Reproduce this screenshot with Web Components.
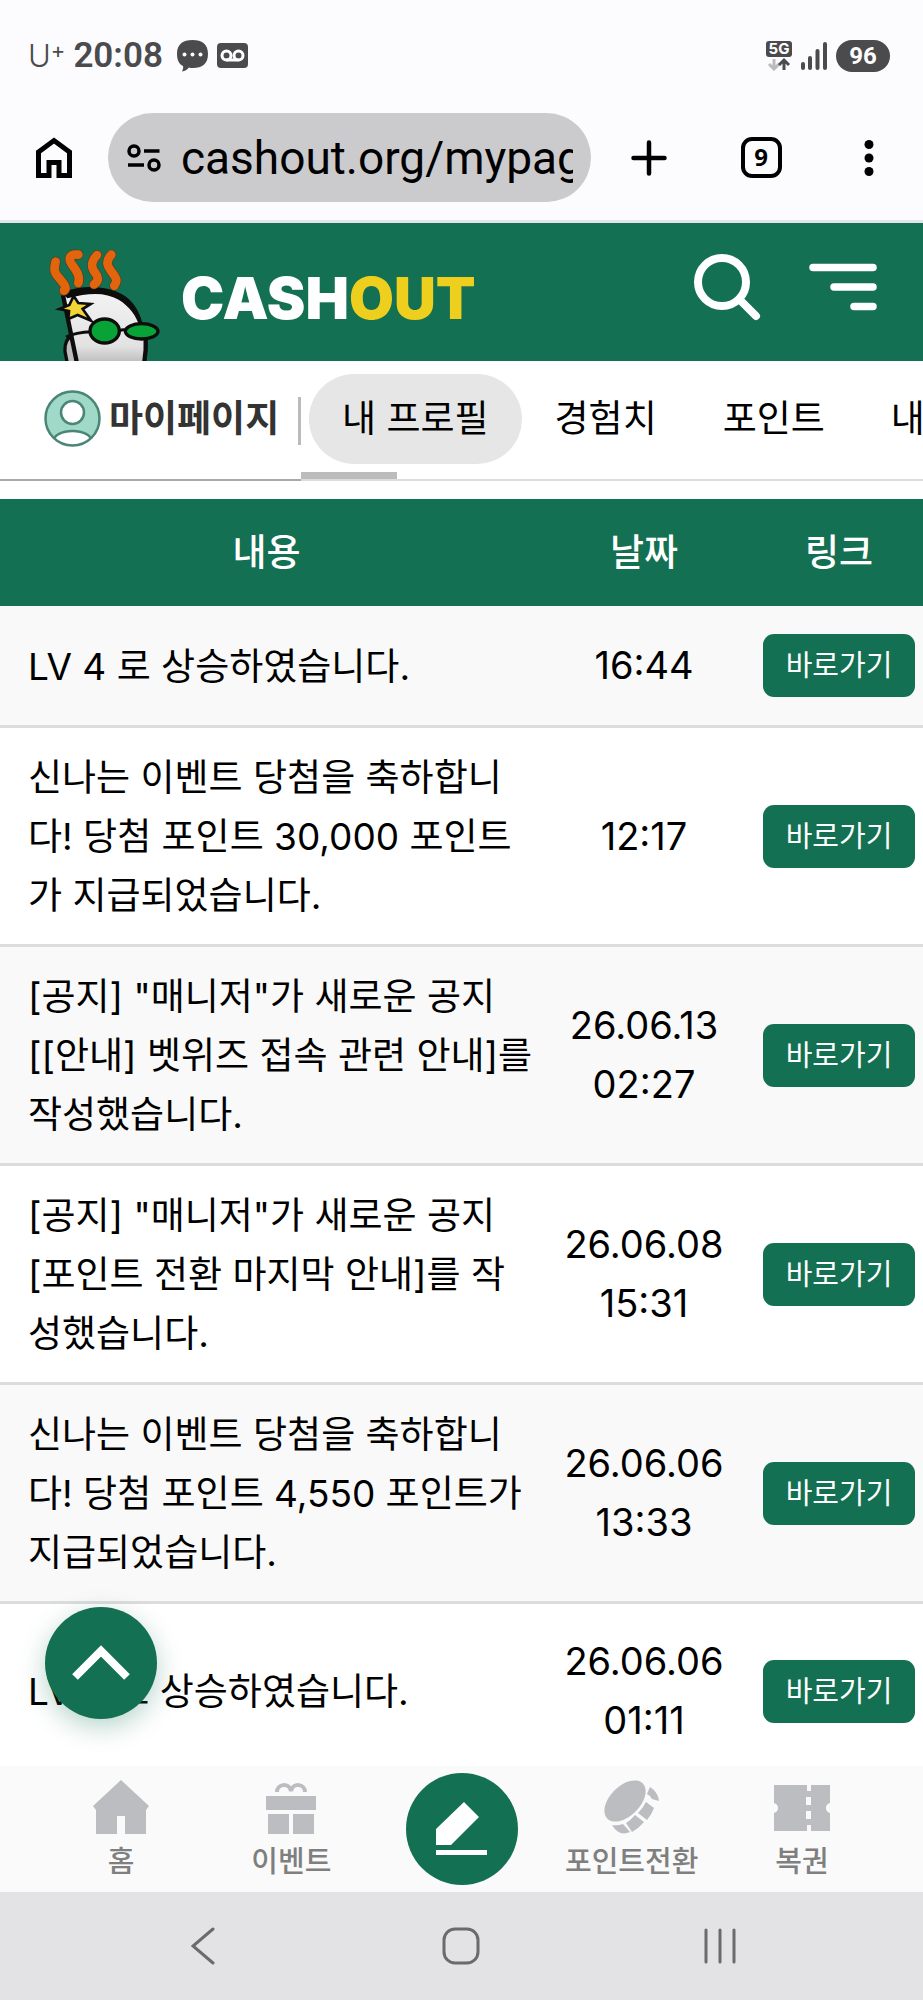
<!DOCTYPE html>
<html lang="ko">
<head>
<meta charset="utf-8">
<meta name="viewport" content="width=device-width, initial-scale=1">
<title>CASHOUT</title>
<style>
  :root {
    --green: #137052;
    --sans: Inter, "Noto Sans CJK KR", sans-serif;
  }

  body {
    margin: 0;
    height: 100vh;
    display: flex;
    flex-direction: column;
    background: #fff;
    color: #000;
    font-family: var(--sans);
  }

  main {
    flex: 1;
    min-height: 0;
    overflow: hidden;
  }
</style>
</head>
<body>
  <status-bar time="20:08" battery="96"></status-bar>
  <browser-bar url="cashout.org/mypage" tabs="9"></browser-bar>
  <site-header></site-header>
  <page-tabs>
    <span slot="title">마이페이지</span>
    <page-tab active>내 프로필</page-tab>
    <page-tab>경험치</page-tab>
    <page-tab>포인트</page-tab>
    <page-tab>내</page-tab>
  </page-tabs>
  <main>
    <notice-table></notice-table>
  </main>
  <bottom-menu></bottom-menu>
  <system-nav></system-nav>

<script>
class StatusBar extends HTMLElement {
  constructor() {
    super();
    this._shadowRoot = this.attachShadow({ mode: 'open' });
  }

  connectedCallback() {
    this._shadowRoot.innerHTML = `
    <style>
      :host {
        display: flex;
        align-items: center;
        box-sizing: border-box;
        height: 113px;
        padding: 0 33px 2px 28px;
        background: #fcfcff;
        color: #4b4b4d;
        font-family: Roboto, sans-serif;
      }
      .carrier { font: 300 31px/40px Inter, sans-serif; }
      .carrier sup { font-size: 22px; font-weight: 400; line-height: 0; vertical-align: 9px; }
      .time { margin: 0 14px 0 8px; font-size: 35px; font-weight: 600; }
      .right { margin-left: auto; }
      .left, .right { display: flex; align-items: center; gap: 9px; }
      .battery {
        width: 54px;
        height: 32px;
        border-radius: 16px;
        background: #4b4b4d;
        color: #fff;
        font: 700 24px/32px Roboto, sans-serif;
        text-align: center;
      }
      .net { display: flex; flex-direction: column; align-items: center; }
      .net span {
        width: 26px;
        height: 16px;
        border-radius: 3px;
        background: #4b4b4d;
        color: #fff;
        font: 700 15px/16px Inter, sans-serif;
        text-align: center;
      }
      svg { display: block; }
    </style>
    <span class="carrier">U<sup>+</sup></span>
    <span class="time">${this.getAttribute('time')}</span>
    <div class="left">
      <svg width="31" height="32" viewBox="0 0 31 32">
        <path fill="#4b4b4d" d="M15.500 0C25 0 31 4 31 14s-6 14-15 14c-2 0-3 0-4-.5C10 30 8 31 5 31.500c1-2 1.500-4 1-5.500C2 24 0 20 0 14 0 4 6 0 15.500 0z"/>
        <g fill="#fff"><circle cx="7.500" cy="14.500" r="2"/><circle cx="15.500" cy="14.500" r="2"/><circle cx="23.500" cy="14.500" r="2"/></g>
      </svg>
      <svg width="31" height="25" viewBox="0 0 31 25">
        <rect width="31" height="25" rx="4" fill="#4b4b4d"/>
        <g fill="none" stroke="#fff" stroke-width="3"><circle cx="9.500" cy="12.500" r="4.500"/><circle cx="21.500" cy="12.500" r="4.500"/><path d="M9.500 17h12"/></g>
      </svg>
    </div>
    <div class="right">
      <div class="net">
        <span>5G</span>
        <svg width="24" height="14" viewBox="0 0 24 14" fill="none" stroke-width="3">
          <path stroke="#bbb" d="M7 2v10M2 7l5 5 5-5"/>
          <path stroke="#4b4b4d" d="M17 13V3M12 8l5-5 5 5"/>
        </svg>
      </div>
      <svg width="26" height="28" viewBox="0 0 26 28" stroke="#4b4b4d" stroke-width="4" stroke-linecap="round">
        <path d="M2 22v4M9 16v10M16.500 9v17M24 2v24"/>
      </svg>
      <span class="battery">${this.getAttribute('battery')}</span>
    </div>
    `;
  }
}

class BrowserBar extends HTMLElement {
  constructor() {
    super();
    this._shadowRoot = this.attachShadow({ mode: 'open' });
  }

  connectedCallback() {
    this._shadowRoot.innerHTML = `
    <style>
      :host {
        display: flex;
        align-items: center;
        box-sizing: border-box;
        height: 110px;
        padding: 0 0 18px;
        border-bottom: 3px solid #e1e7e8;
        background: #fcfcff;
      }
      button {
        display: flex;
        align-items: center;
        justify-content: center;
        width: 108px;
        height: 89px;
        padding: 0;
        border: none;
        background: none;
        color: #000;
      }
      .new-tab { width: 116px; }
      .omnibox {
        flex: 1;
        min-width: 0;
        display: flex;
        align-items: center;
        gap: 20px;
        height: 89px;
        padding: 0 18px 0 19px;
        box-sizing: border-box;
        border-radius: 45px;
        background: #cbcbcd;
      }
      .omnibox svg { flex: none; }
      input {
        flex: 1;
        min-width: 0;
        height: 70px;
        padding: 0;
        border: none;
        outline: none;
        background: none;
        color: #000;
        font: 400 46px/70px Roboto, sans-serif;
      }
      .count {
        width: 33px;
        height: 33px;
        border: 4px solid #000;
        border-radius: 11px;
        font: 700 24px/32px "Open Sans", sans-serif;
      }
    </style>
    <button aria-label="홈">
      <svg width="38" height="42" viewBox="0 0 38 42" fill="none" stroke="#000" stroke-width="5">
        <path d="M3.500 38.500V15L19 3.500 34.500 15v23.500H24V25.500H14v13z"/>
      </svg>
    </button>
    <div class="omnibox">
      <svg width="34" height="28" viewBox="0 0 34 28" fill="none" stroke="#000" stroke-width="3.500">
        <circle cx="7" cy="7" r="5"/><circle cx="27" cy="21" r="5"/><path d="M17 7h15.500M1 21h16"/>
      </svg>
      <input type="text" aria-label="주소" value="${this.getAttribute('url')}">
    </div>
    <button class="new-tab" aria-label="새 탭">
      <svg width="36" height="36" viewBox="0 0 36 36" stroke="#000" stroke-width="4.500" stroke-linecap="round"><path d="M18 2.500v31M2.500 18h31"/></svg>
    </button>
    <button aria-label="탭"><span class="count">${this.getAttribute('tabs')}</span></button>
    <button aria-label="메뉴">
      <svg width="10" height="36" viewBox="0 0 10 36"><circle cx="5" cy="4.500" r="4.500"/><circle cx="5" cy="18" r="4.500"/><circle cx="5" cy="31.500" r="4.500"/></svg>
    </button>
    `;
  }
}

class SiteHeader extends HTMLElement {
  constructor() {
    super();
    this._shadowRoot = this.attachShadow({ mode: 'open' });
  }

  connectedCallback() {
    this._shadowRoot.innerHTML = `
    <style>
      :host {
        display: flex;
        align-items: center;
        height: 138px;
        padding: 0 46px 0 30px;
        background: var(--green);
      }
      a {
        display: flex;
        align-items: center;
        align-self: stretch;
        gap: 1px;
        color: #fff;
        font: 900 58px/70px Inter, sans-serif;
        text-decoration: none;
      }
      .mascot { align-self: flex-end; }
      .word { margin-top: 11px; }
      .word b { color: #eecf1d; font-weight: inherit; }
      nav { display: flex; align-items: center; gap: 48px; margin: 0 0 10px auto; }
      button { display: block; padding: 0; border: none; background: none; }
      svg { display: block; }
    </style>
    <a href="#">
      <svg class="mascot" width="150" height="126" viewBox="0 0 450 378">
        <defs>
          <linearGradient id="skin" x1="0" y1="0" x2="0" y2="1">
            <stop offset="0" stop-color="#f4f4f4"/><stop offset=".75" stop-color="#e2e2e2"/><stop offset="1" stop-color="#b8b8b8"/>
          </linearGradient>
        </defs>
        <path d="M124 305c-16 6-20 22-19 45l8 40h30" fill="#bdbdbd" stroke="#0d0d0d" stroke-width="10"/>
        <path d="M143 390L102 182C170 150 240 160 280 190 312 214 328 240 336 280L345 330V390z" fill="url(#skin)"/>
        <path d="M94 172C170 145 245 155 286 184 318 208 332 240 340 275L330 278C318 240 298 214 266 194 226 172 180 172 112 190z" fill="#0d0d0d"/>
        <path d="M99 180L142 390" stroke="#0d0d0d" stroke-width="13"/>
        <path d="M347 308V345L342 390" fill="none" stroke="#0d0d0d" stroke-width="13"/>
        <path d="M108 306C130 295 155 291 185 290M266 288C280 282 285 284 295 288" fill="none" stroke="#0d0d0d" stroke-width="9"/>
        <ellipse cx="224" cy="288" rx="44" ry="36" fill="#08a336" stroke="#0d0d0d" stroke-width="10"/>
        <ellipse cx="335" cy="289" rx="49" ry="23" fill="#08a336" stroke="#0d0d0d" stroke-width="10"/>
        <path d="M131 183L145 204 182 207 158 222 183 257 143 240 115 252 117 228 88 222 118 210z" fill="#f2d437" stroke="#0d0d0d" stroke-width="8"/>
        <g fill="none" stroke-linecap="round" stroke-linejoin="round">
          <g stroke="#54401f" stroke-width="30">
            <path d="M77 80C68 112 78 118 94 137S108 162 102 167"/>
            <path d="M145 59C117 56 113 72 128 92S150 125 145 144"/>
            <path d="M201 60C181 83 183 98 196 114S203 141 192 148"/>
            <path d="M244 59C224 80 233 94 246 112S264 137 253 152"/>
          </g>
          <g stroke="#e2650e" stroke-width="26">
            <path d="M77 80C68 112 78 118 94 137S108 162 102 167"/>
            <path d="M145 59C117 56 113 72 128 92S150 125 145 144"/>
            <path d="M201 60C181 83 183 98 196 114S203 141 192 148"/>
            <path d="M244 59C224 80 233 94 246 112S264 137 253 152"/>
          </g>
        </g>
      </svg>
      <span class="word">CASH<b>OUT</b></span>
    </a>
    <nav>
      <button aria-label="검색">
        <svg width="68" height="68" viewBox="0 0 68 68" fill="none" stroke="#fff" stroke-width="8" stroke-linecap="round">
          <circle cx="29" cy="29" r="24"/><path d="M46.500 46.500L63 63"/>
        </svg>
      </button>
      <button aria-label="메뉴">
        <svg width="68" height="48" viewBox="0 0 68 48" stroke="#fff" stroke-width="7.500" stroke-linecap="round">
          <path d="M4 4.500h60M25 24h39M45 43.500h19"/>
        </svg>
      </button>
    </nav>
    `;
  }
}

class PageTabs extends HTMLElement {
  constructor() {
    super();
    this._shadowRoot = this.attachShadow({ mode: 'open' });
  }

  connectedCallback() {
    this._shadowRoot.innerHTML = `
    <style>
      :host {
        display: flex;
        height: 120px;
        margin-bottom: 18px;
        overflow: hidden;
      }
      h2 {
        flex: none;
        display: flex;
        align-items: center;
        gap: 8px;
        box-sizing: border-box;
        width: 301px;
        margin: 0;
        padding: 0 0 3px 44px;
        border-bottom: 2px solid #a9a9a9;
        color: #333;
        font-size: 37px;
        font-weight: 700;
        line-height: 48px;
        white-space: nowrap;
      }
      h2::after {
        content: "";
        width: 3px;
        height: 48px;
        margin: 5px 0 0 auto;
        background: #bbb;
      }
      .scroller {
        flex: 1;
        min-width: 0;
        display: flex;
        flex-direction: column;
        overflow: hidden;
        border-bottom: 2px solid #dcdcdc;
      }
      .list { flex: 1; display: flex; align-items: center; padding: 5px 0 0 8px; }
      .thumb { width: 96px; height: 7px; background: #bcbcbc; }
    </style>
    <h2>
      <svg width="57" height="57" viewBox="0 0 57 57">
        <defs><clipPath id="disc"><circle cx="28.500" cy="28.500" r="27"/></clipPath></defs>
        <circle cx="28.500" cy="28.500" r="27" fill="#a0d9c7"/>
        <g clip-path="url(#disc)" fill="#fff" stroke="#4a8576" stroke-width="2.500">
          <ellipse cx="28.500" cy="51" rx="19" ry="10"/>
          <circle cx="28.500" cy="22.500" r="11.500"/>
        </g>
        <circle cx="28.500" cy="28.500" r="27" fill="none" stroke="#4a8576" stroke-width="2.500"/>
      </svg>
      <slot name="title"></slot>
    </h2>
    <div class="scroller">
      <div class="list"><slot></slot></div>
      <div class="thumb"></div>
    </div>
    `;
  }
}

class PageTab extends HTMLElement {
  constructor() {
    super();
    this._shadowRoot = this.attachShadow({ mode: 'open' });
  }

  connectedCallback() {
    this._shadowRoot.innerHTML = `
    <style>
      :host { display: block; flex: none; }
      a {
        display: block;
        padding: 0 33px;
        border-radius: 45px;
        color: #000;
        font-size: 37px;
        line-height: 90px;
        text-decoration: none;
        white-space: nowrap;
      }
      :host([active]) a { background: #e6e6e6; }
    </style>
    <a href="#"><slot></slot></a>
    `;
  }
}

class NoticeTable extends HTMLElement {
  constructor() {
    super();
    this._shadowRoot = this.attachShadow({ mode: 'open' });

    this._notices = [
      ['LV 4 로 상승하였습니다.', '16:44'],
      ['신나는 이벤트 당첨을 축하합니다! 당첨 포인트 30,000 포인트가 지급되었습니다.', '12:17'],
      ['[공지] "매니저"가 새로운 공지 [[안내] 벳위즈 접속 관련 안내]를 작성했습니다.', '26.06.13 02:27'],
      ['[공지] "매니저"가 새로운 공지 [포인트 전환 마지막 안내]를 작성했습니다.', '26.06.08 15:31'],
      ['신나는 이벤트 당첨을 축하합니다! 당첨 포인트 4,550 포인트가 지급되었습니다.', '26.06.06 13:33'],
      ['LV 2 로 상승하였습니다.', '26.06.06 01:11']
    ];
  }

  connectedCallback() {
    const rows = this._notices.map(([text, date]) => `
      <tr>
        <td class="text">${text}</td>
        <td class="date">${date}</td>
        <td><a href="#">바로가기</a></td>
      </tr>`).join('');

    this._shadowRoot.innerHTML = `
    <style>
      :host { display: block; }
      table {
        width: 100%;
        table-layout: fixed;
        border-spacing: 0;
        font-size: 37px;
        line-height: 59px;
        text-align: center;
      }
      th { height: 107px; padding: 0; background: var(--green); color: #fff; font-size: 37px; font-weight: 500; }
      th:nth-child(2) { width: 222px; }
      th:nth-child(3) { width: 168px; }
      td { padding: 28px 8px; border-bottom: 3px solid #dcdcdc; }
      td.text { padding: 20px 0 19px 28px; text-align: left; word-break: break-all; }
      td.date { padding: 28px 30px; font-size: 38px; }
      tbody tr:nth-child(odd) { background: #f9f9f9; }
      a {
        display: block;
        border-radius: 11px;
        background: var(--green);
        color: #fff;
        font-size: 29px;
        line-height: 63px;
        text-decoration: none;
      }
    </style>
    <table>
      <thead><tr><th>내용</th><th>날짜</th><th>링크</th></tr></thead>
      <tbody>${rows}</tbody>
    </table>
    `;
  }
}

class BottomMenu extends HTMLElement {
  constructor() {
    super();
    this._shadowRoot = this.attachShadow({ mode: 'open' });
  }

  connectedCallback() {
    this._shadowRoot.innerHTML = `
    <style>
      :host {
        position: relative;
        display: block;
        background: #fafafa;
      }
      nav { display: flex; padding: 0 36px; height: 126px; }
      a {
        flex: 1;
        display: flex;
        flex-direction: column;
        align-items: center;
        justify-content: center;
        gap: 8px;
        padding-top: 4px;
        color: #7f7f7f;
        font-size: 29px;
        font-weight: 500;
        line-height: 40px;
        text-decoration: none;
        white-space: nowrap;
      }
      a svg { fill: #bbbdc1; }
      button {
        width: 112px;
        height: 112px;
        padding: 0;
        border: none;
        border-radius: 50%;
        background: var(--green);
      }
      .write { display: flex; flex: 1; align-items: center; justify-content: center; }
      button svg { display: block; margin: auto; }
      /* floats over the list, just above the menu */
      .top {
        position: absolute;
        left: 45px;
        bottom: calc(100% + 47px);
        box-shadow: 0 8px 26px rgba(19, 112, 82, .3);
      }
    </style>
    <button class="top" aria-label="맨 위로">
      <svg width="60" height="36" viewBox="0 0 60 36" fill="none" stroke="#fff" stroke-width="8"><path d="M4 32L30 6l26 26"/></svg>
    </button>
    <nav>
      <a href="#">
        <svg width="56" height="54" viewBox="0 0 56 54"><path d="M28 0l28 26-3 4v24H32V36h-8v18H3V30l-3-4z"/></svg>
        홈
      </a>
      <a href="#">
        <svg width="56" height="54" viewBox="0 0 56 54">
          <path d="M3 16h50v14H3zM5 34h21v20H5zM30 34h21v20H30z"/>
          <path d="M14 12c0-8 12-10 14-1 2-9 14-7 14 1" fill="none" stroke="#bbbdc1" stroke-width="4"/>
        </svg>
        이벤트
      </a>
      <div class="write">
        <button aria-label="글쓰기">
          <svg width="52" height="54" viewBox="0 0 52 54" fill="#fff">
            <path d="M0 43V27L28 0l15 15-28 28zM0 48h51v5H0z"/>
          </svg>
        </button>
      </div>
      <a href="#">
        <svg width="56" height="54" viewBox="0 0 56 54">
          <ellipse cx="21" cy="21" rx="25" ry="15" transform="rotate(-45 21 21)"/>
          <path d="M46 7q8 5 9 14l-7-2q-2-4-5-5zM42 22l8 6q-2 6-7 12l-9-7q5-5 8-11zM31 35l9 7q-5 6-12 10l-6-9q5-3 9-8zM8 45q5 1 11-1l7 8q-11 5-18-7z"/>
        </svg>
        포인트전환
      </a>
      <a href="#">
        <svg width="56" height="54" viewBox="0 0 56 54">
          <path d="M0 5h33v6h4V5h19v18q-4 1-4 5t4 5v18H37v-6h-4v6H0V33q4-1 4-5t-4-5z"/>
          <path fill="#fafafa" d="M32 17h5v8h-5zM32 31h5v8h-5z"/>
        </svg>
        복권
      </a>
    </nav>
    `;
  }
}

class SystemNav extends HTMLElement {
  constructor() {
    super();
    this._shadowRoot = this.attachShadow({ mode: 'open' });
  }

  connectedCallback() {
    this._shadowRoot.innerHTML = `
    <style>
      :host { display: flex; height: 108px; padding: 0 74px; background: #e3e3e5; }
      button { flex: 1; padding: 0; border: none; background: none; }
      svg { display: block; margin: auto; fill: none; stroke: #6b6b6d; stroke-width: 3; stroke-linecap: round; }
    </style>
    <button aria-label="뒤로"><svg width="24" height="38" viewBox="0 0 24 38"><path d="M22 2L2 19l20 17"/></svg></button>
    <button aria-label="홈"><svg width="38" height="38" viewBox="0 0 38 38"><rect x="2" y="2" width="34" height="34" rx="11"/></svg></button>
    <button aria-label="최근 앱"><svg width="34" height="38" viewBox="0 0 34 38"><path d="M3 3v32M17 3v32M31 3v32"/></svg></button>
    `;
  }
}

customElements.define('status-bar', StatusBar);
customElements.define('browser-bar', BrowserBar);
customElements.define('site-header', SiteHeader);
customElements.define('page-tabs', PageTabs);
customElements.define('page-tab', PageTab);
customElements.define('notice-table', NoticeTable);
customElements.define('bottom-menu', BottomMenu);
customElements.define('system-nav', SystemNav);
</script>
</body>
</html>
